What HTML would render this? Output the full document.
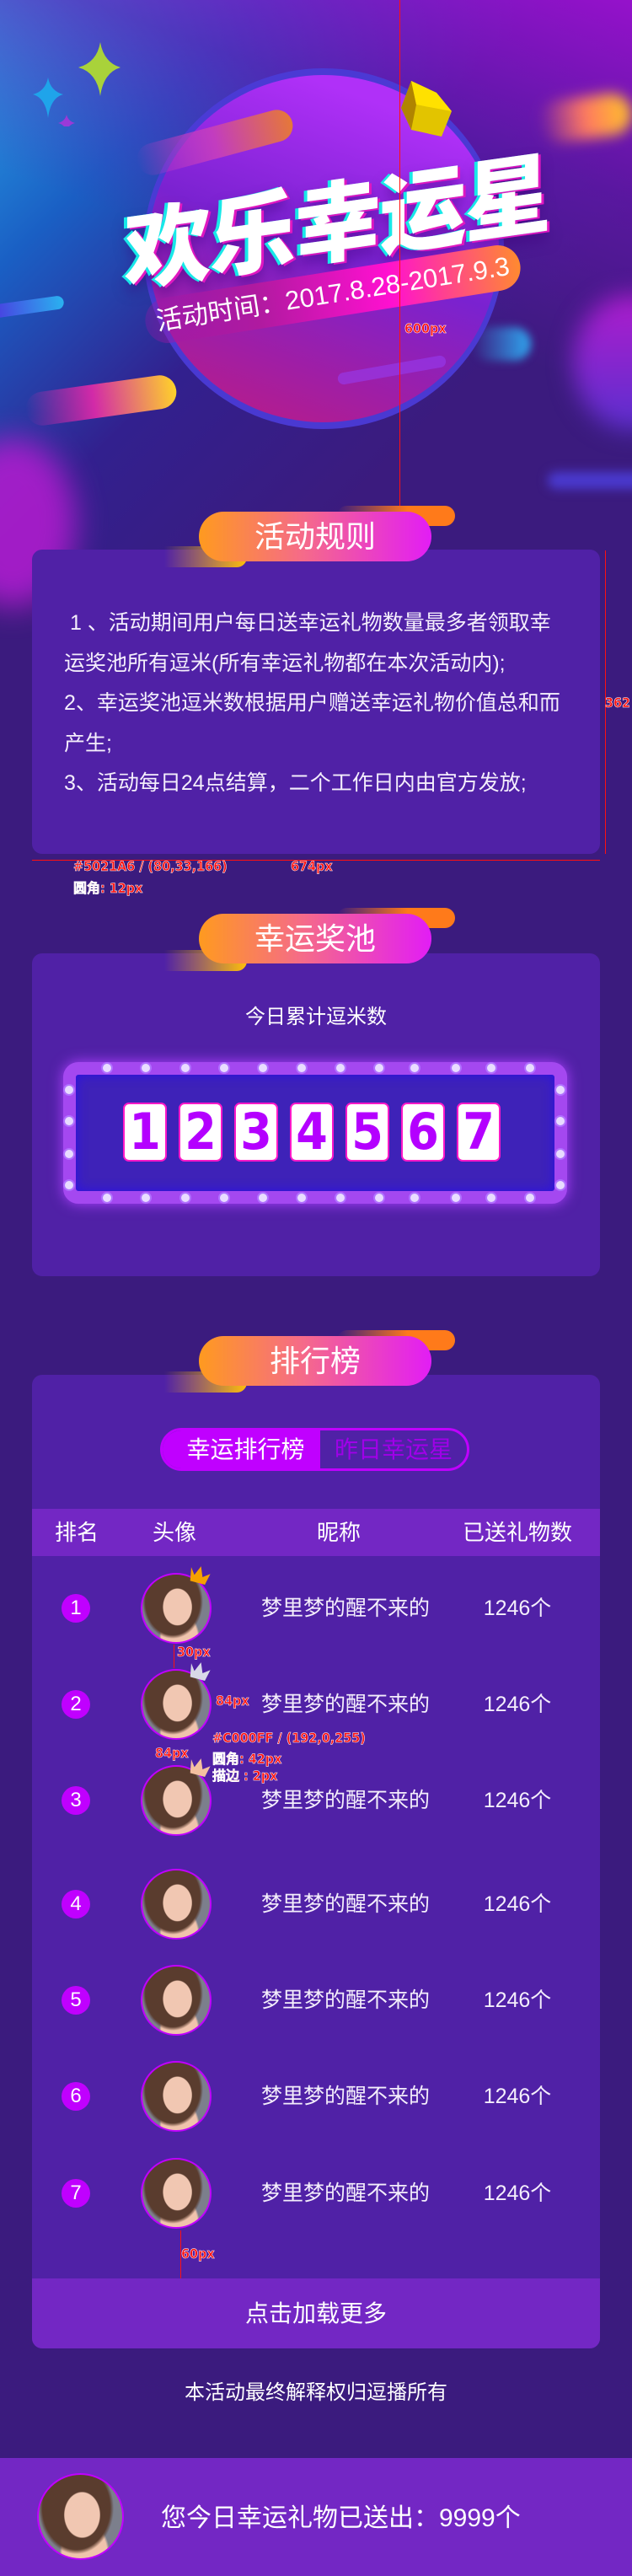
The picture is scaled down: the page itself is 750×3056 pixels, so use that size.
<!DOCTYPE html>
<html><head><meta charset="utf-8">
<style>
*{margin:0;padding:0;box-sizing:border-box}
body{width:750px;height:3056px;overflow:hidden;background:#3b1b7e;font-family:"Liberation Sans","Noto Sans CJK SC",sans-serif;color:#fff;position:relative}
.abs{position:absolute}
.hero{left:0;top:0;width:750px;height:700px;background:linear-gradient(135deg,#2aa6e8 0%,#1a5fc4 22%,#32208e 45%,#3b1b7e 70%);}
.hero2{left:0;top:0;width:750px;height:520px;background:linear-gradient(200deg,rgba(160,16,210,.9) 0%,rgba(110,20,180,.6) 30%,rgba(59,27,126,0) 60%)}
.card{left:38px;width:674px;background:#5021a6;border-radius:12px}
.pill{left:236px;width:276px;height:59px;border-radius:30px;background:linear-gradient(90deg,#ff9a1f,#f56a8a 45%,#e21df5);text-align:center;font-size:36px;line-height:59px;color:#fff}
.obar{left:400px;width:140px;height:24px;border-radius:12px;background:linear-gradient(90deg,rgba(255,120,30,0),#ff7a1a 60%)}
.ybar{left:195px;width:98px;height:25px;border-radius:0 12px 12px 0;background:linear-gradient(90deg,rgba(255,190,0,0),#ffbf0a)}
.rule{left:76px;font-size:25px;line-height:47.5px;color:#f4eefc}
.dg{position:absolute;top:1308px;width:52px;height:70px;background:#fff;border:2px solid #ff18c8;border-radius:7px;color:#b400ff;font-weight:bold;font-size:60px;line-height:66px;text-align:center;font-family:"DejaVu Sans Condensed","Liberation Sans Narrow",sans-serif;transform:scaleX(1)}
.th{top:1790px;height:56px;left:38px;width:674px;background:#7327c4;font-size:26px;line-height:56px}
.th span,.row span{position:absolute;transform:translateX(-50%);white-space:nowrap}
.row{left:0;width:750px;height:84px}
.rk{position:absolute;left:73px;top:25px;width:34px;height:34px;border-radius:50%;background:#c000ff;font-size:24px;line-height:34px;text-align:center}
.av{position:absolute;left:167px;top:0;width:84px;height:84px;border-radius:50%;border:2px solid #c000ff;overflow:hidden;background:
radial-gradient(ellipse 22% 28% at 52% 48%,#f1c7b2 0 95%,transparent 100%),
radial-gradient(ellipse 45% 55% at 45% 40%,#5a3c2e 0 90%,transparent 100%),
radial-gradient(ellipse 30% 40% at 55% 95%,#f0c3ac 0 90%,transparent 100%),
#7c7f8c}
.nm{font-size:25px;line-height:84px;color:#f4eefc}
.red{color:#ff1010;font-weight:bold;font-family:"DejaVu Sans Condensed",sans-serif;-webkit-text-stroke:0.5px #fff;font-size:16px;position:absolute;white-space:nowrap}
</style></head><body>
<div class="abs hero"></div>
<div class="abs hero2"></div>
<!-- blurry blobs -->
<div class="abs" style="left:-60px;top:520px;width:150px;height:200px;border-radius:50%;background:#b51cd0;filter:blur(18px);opacity:.85"></div>
<div class="abs" style="left:680px;top:350px;width:140px;height:160px;border-radius:50%;background:linear-gradient(#b01ccc,#5a30d0);filter:blur(14px)"></div>
<div class="abs" style="left:650px;top:560px;width:120px;height:20px;border-radius:10px;background:#4a3ad0;filter:blur(6px)"></div>
<div class="abs" style="left:640px;top:115px;width:110px;height:50px;border-radius:25px;background:linear-gradient(90deg,rgba(250,80,160,0),#ff7a60,#ffc428);filter:blur(8px);transform:rotate(-8deg)"></div>
<div class="abs" style="left:560px;top:388px;width:70px;height:40px;border-radius:20px;background:linear-gradient(90deg,rgba(40,150,240,0),#2fa8f0);filter:blur(5px)"></div>
<!-- planet -->
<div class="abs" style="left:170px;top:81px;width:428px;height:428px;border-radius:50%;background:#4b3bd6;opacity:.95"></div>
<div class="abs" style="left:176px;top:89px;width:416px;height:412px;border-radius:50%;background:linear-gradient(20deg,#c01b80 0%,#7a22d0 50%,#b030f8 85%)"></div>
<div class="abs" style="left:176px;top:89px;width:416px;height:412px;border-radius:50%;background:radial-gradient(circle at 50% 75%,rgba(60,27,126,0) 60%,rgba(60,27,126,.0) 100%)"></div>
<!-- streaks -->
<div class="abs" style="left:160px;top:150px;width:190px;height:38px;border-radius:19px;background:linear-gradient(90deg,rgba(120,60,220,0),#c23cc0 50%,#e67838);transform:rotate(-15deg)"></div>
<div class="abs" style="left:30px;top:455px;width:180px;height:40px;border-radius:20px;background:linear-gradient(90deg,rgba(200,30,180,0),#d22aa8 45%,#ffd22a);transform:rotate(-8deg)"></div>
<div class="abs" style="left:-10px;top:356px;width:86px;height:16px;border-radius:8px;background:linear-gradient(90deg,#4a3ae0,#2ab2f0);transform:rotate(-8deg)"></div>
<div class="abs" style="left:400px;top:432px;width:130px;height:14px;border-radius:7px;background:rgba(150,60,240,.6);transform:rotate(-10deg)"></div>
<!-- stars -->
<svg class="abs" style="left:35px;top:40px" width="120" height="110" viewBox="0 0 120 110">
<path d="M84 10 Q88 34 108 40 Q88 46 84 74 Q80 46 58 40 Q80 34 84 10Z" fill="#a9d23a"/>
<path d="M22 52 Q25 68 40 72 Q25 76 22 100 Q19 76 4 72 Q19 68 22 52Z" fill="#1fa4ea"/>
<path d="M44 96 Q46 104 54 106 Q46 108 44 116 Q42 108 34 106 Q42 104 44 96Z" fill="#9a3ad8"/>
</svg>
<!-- cube -->
<svg class="abs" style="left:474px;top:92px" width="66" height="72" viewBox="0 0 66 72">
<polygon points="14,4 44,18 62,40 50,70 14,62 2,36" fill="#e2c400"/>
<polygon points="14,4 2,36 14,62 20,32" fill="#b08400"/>
<polygon points="14,4 44,18 62,40 30,34 20,32" fill="#ffe100"/>
</svg>
<!-- title -->
<div class="abs" style="left:100px;top:180px;width:600px;text-align:center;transform:rotate(-8deg) skewX(-8deg);font-size:104px;font-weight:900;letter-spacing:-2px;color:#fff;text-shadow:-4px 0 0 #18e8e8,3px 2px 0 #e018c0,0 10px 16px rgba(60,0,120,.5);font-family:'Noto Sans CJK SC',sans-serif">欢乐幸运星</div>
<!-- date pill -->
<div class="abs" style="left:170px;top:322px;width:450px;height:54px;border-radius:27px;transform:rotate(-9deg);background:linear-gradient(90deg,rgba(150,20,170,.3),#b01aa0 30%,#ff10d0 65%,#ff8a30);"></div>
<div class="abs" style="left:175px;top:322px;width:440px;height:54px;transform:rotate(-9deg);font-size:31px;line-height:54px;text-align:center;white-space:nowrap">活动时间：2017.8.28-2017.9.3</div>

<!-- annotation line -->
<div class="abs" style="left:474px;top:0;width:1px;height:600px;background:#ff1010"></div>
<div class="red" style="left:480px;top:380px">600px</div>

<!-- section 1 -->
<div class="abs obar" style="top:600px"></div>
<div class="abs card" style="top:652px;height:361px"></div>
<div class="abs ybar" style="top:648px"></div>
<div class="abs pill" style="top:607px">活动规则</div>
<div class="abs rule" style="top:716px">&nbsp;1 、活动期间用户每日送幸运礼物数量最多者领取幸<br>运奖池所有逗米(所有幸运礼物都在本次活动内);<br>2、幸运奖池逗米数根据用户赠送幸运礼物价值总和而<br>产生;<br>3、活动每日24点结算，二个工作日内由官方发放;</div>
<div class="abs" style="left:38px;top:1020px;width:674px;height:1px;background:#ff1010"></div>
<div class="abs" style="left:718px;top:653px;width:1px;height:360px;background:#ff1010"></div>
<div class="red" style="left:718px;top:824px">362</div>
<div class="red" style="left:87px;top:1018px">#5021A6 / (80,33,166)</div>
<div class="red" style="left:345px;top:1018px">674px</div>
<div class="red" style="left:87px;top:1040px">圆角: 12px</div>

<!-- section 2 -->
<div class="abs obar" style="top:1077px"></div>
<div class="abs card" style="top:1131px;height:383px"></div>
<div class="abs ybar" style="top:1127px"></div>
<div class="abs pill" style="top:1084px">幸运奖池</div>
<div class="abs" style="left:0;width:750px;top:1190px;text-align:center;font-size:24px;line-height:34px">今日累计逗米数</div>
<div class="abs" style="left:75px;top:1260px;width:598px;height:168px;border-radius:18px;border:15px solid #a448f0;background:#3e22b8;box-shadow:0 0 16px #b040ff,inset 0 0 14px #2a10e8"></div>
<svg class="abs" style="left:0;top:1250px" width="750" height="190">
<g fill="#e8dcff" stroke="#b070ff" stroke-width="2">
<circle cx="127" cy="17" r="6"/><circle cx="173" cy="17" r="6"/><circle cx="220" cy="17" r="6"/><circle cx="266" cy="17" r="6"/><circle cx="312" cy="17" r="6"/><circle cx="358" cy="17" r="6"/><circle cx="404" cy="17" r="6"/><circle cx="450" cy="17" r="6"/><circle cx="492" cy="17" r="6"/><circle cx="541" cy="17" r="6"/><circle cx="583" cy="17" r="6"/><circle cx="629" cy="17" r="6"/>
<circle cx="127" cy="171" r="6"/><circle cx="173" cy="171" r="6"/><circle cx="220" cy="171" r="6"/><circle cx="266" cy="171" r="6"/><circle cx="312" cy="171" r="6"/><circle cx="358" cy="171" r="6"/><circle cx="404" cy="171" r="6"/><circle cx="450" cy="171" r="6"/><circle cx="492" cy="171" r="6"/><circle cx="541" cy="171" r="6"/><circle cx="583" cy="171" r="6"/><circle cx="629" cy="171" r="6"/>
<circle cx="82" cy="43" r="6"/><circle cx="82" cy="80" r="6"/><circle cx="82" cy="119" r="6"/><circle cx="82" cy="156" r="6"/>
<circle cx="665" cy="43" r="6"/><circle cx="665" cy="80" r="6"/><circle cx="665" cy="119" r="6"/><circle cx="665" cy="156" r="6"/>
</g></svg>
<div class="dg" style="left:146px">1</div>
<div class="dg" style="left:212px">2</div>
<div class="dg" style="left:278px">3</div>
<div class="dg" style="left:344px">4</div>
<div class="dg" style="left:410px">5</div>
<div class="dg" style="left:476px">6</div>
<div class="dg" style="left:542px">7</div>

<!-- section 3 -->
<div class="abs obar" style="top:1578px"></div>
<div class="abs card" style="top:1631px;height:1155px"></div>
<div class="abs ybar" style="top:1627px"></div>
<div class="abs pill" style="top:1585px">排行榜</div>
<div class="abs" style="left:190px;top:1694px;width:367px;height:51px;border:3px solid #c000ff;border-radius:26px;overflow:hidden">
<div class="abs" style="left:0;top:0;width:187px;height:45px;background:#c000ff;font-size:28px;line-height:45px;text-align:center;padding-left:10px">幸运排行榜</div>
<div class="abs" style="left:187px;top:0;width:174px;height:45px;font-size:28px;line-height:45px;text-align:center;color:#a000e8">昨日幸运星</div>
</div>
<div class="abs th"><span style="left:53px">排名</span><span style="left:169px">头像</span><span style="left:364px">昵称</span><span style="left:576px">已送礼物数</span></div>

<div class="abs row" style="top:1866px"><div class="rk">1</div><div class="av"></div><span class="nm" style="left:410px">梦里梦的醒不来的</span><span class="nm" style="left:614px">1246个</span></div>
<div class="abs row" style="top:1980px"><div class="rk">2</div><div class="av"></div><span class="nm" style="left:410px">梦里梦的醒不来的</span><span class="nm" style="left:614px">1246个</span></div>
<div class="abs row" style="top:2094px"><div class="rk">3</div><div class="av"></div><span class="nm" style="left:410px">梦里梦的醒不来的</span><span class="nm" style="left:614px">1246个</span></div>
<div class="abs row" style="top:2217px"><div class="rk">4</div><div class="av"></div><span class="nm" style="left:410px">梦里梦的醒不来的</span><span class="nm" style="left:614px">1246个</span></div>
<div class="abs row" style="top:2331px"><div class="rk">5</div><div class="av"></div><span class="nm" style="left:410px">梦里梦的醒不来的</span><span class="nm" style="left:614px">1246个</span></div>
<div class="abs row" style="top:2445px"><div class="rk">6</div><div class="av"></div><span class="nm" style="left:410px">梦里梦的醒不来的</span><span class="nm" style="left:614px">1246个</span></div>
<div class="abs row" style="top:2560px"><div class="rk">7</div><div class="av"></div><span class="nm" style="left:410px">梦里梦的醒不来的</span><span class="nm" style="left:614px">1246个</span></div>
<!-- crowns -->
<svg class="abs" style="left:222px;top:1856px" width="30" height="24" viewBox="0 0 30 24"><polygon points="3,6 9,14 14,2 19,14 27,8 24,22 6,22" fill="#f5a000" transform="rotate(15 15 12)"/></svg>
<svg class="abs" style="left:222px;top:1970px" width="30" height="24" viewBox="0 0 30 24"><polygon points="3,6 9,14 14,2 19,14 27,8 24,22 6,22" fill="#d8d8e8" transform="rotate(15 15 12)"/></svg>
<svg class="abs" style="left:222px;top:2084px" width="30" height="24" viewBox="0 0 30 24"><polygon points="3,6 9,14 14,2 19,14 27,8 24,22 6,22" fill="#f4c0a0" transform="rotate(15 15 12)"/></svg>
<!-- annotations ranking -->
<div class="abs" style="left:206px;top:1951px;width:1px;height:28px;background:#ff1010"></div>
<div class="red" style="left:210px;top:1950px">30px</div>
<div class="red" style="left:256px;top:2008px">84px</div>
<div class="red" style="left:184px;top:2070px">84px</div>
<div class="red" style="left:252px;top:2052px">#C000FF / (192,0,255)</div>
<div class="red" style="left:252px;top:2073px">圆角: 42px</div>
<div class="red" style="left:252px;top:2093px">描边 : 2px</div>
<div class="abs" style="left:214px;top:2646px;width:1px;height:58px;background:#ff1010"></div>
<div class="red" style="left:215px;top:2664px">60px</div>

<div class="abs" style="left:38px;top:2703px;width:674px;height:83px;background:#7327c4;border-radius:0 0 12px 12px;font-size:28px;line-height:83px;text-align:center">点击加载更多</div>
<div class="abs" style="left:0;width:750px;top:2822px;text-align:center;font-size:24px;line-height:34px">本活动最终解释权归逗播所有</div>

<div class="abs" style="left:0;top:2916px;width:750px;height:140px;background:#7327c4"></div>
<div class="av" style="left:44px;top:2934px;width:103px;height:103px"></div>
<div class="abs" style="left:191px;top:2968px;font-size:30px;line-height:40px;white-space:nowrap">您今日幸运礼物已送出：9999个</div>
</body></html>
